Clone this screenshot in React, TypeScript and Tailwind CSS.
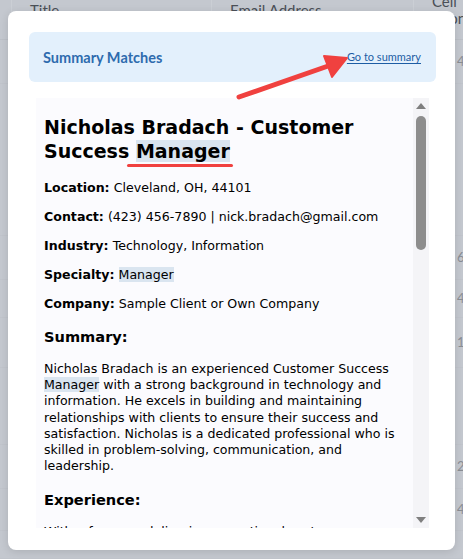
import React from 'react';

const rows = [
  { h: 'h-[44px]', phone: '423-456-7890' },
  { h: 'h-[152px]', phone: '' },
  { h: 'h-[44px]', phone: '614-555-0132' },
  { h: 'h-[38px]', phone: '440-555-0188' },
  { h: 'h-[50px]', phone: '128-555-0147' },
  { h: 'h-[77px]', phone: '' },
  { h: 'h-[44px]', phone: '234-555-0199' },
  { h: 'h-[42px]', phone: '419-555-0163' },
  { h: 'h-[28px]', phone: '' },
];

const Hl = ({ children }: { children: React.ReactNode }) => (
  <span className="bg-[#dae5f0]">{children}</span>
);

const Field = ({ label, children }: { label: string; children: React.ReactNode }) => (
  <p className="my-[13px]">
    <span className="font-bold">{label}</span> {children}
  </p>
);

const App = () => {
  return (
    <div className="relative w-[463px] h-[559px] overflow-hidden bg-[#c4c8cf] font-['Lato',sans-serif]">
      {/* table behind the overlay */}
      <div className="grid grid-cols-[12px_200px_202px_49px] h-[40px] text-[15px] text-[#4b5057] leading-[17px] border-b border-[#bcc0c7]">
        <div className="border-r border-[#cbcfd5]" />
        <div className="pl-[18px] pt-[2px] border-r border-[#cbcfd5] whitespace-nowrap">Title</div>
        <div className="pl-[18px] pt-[2px] border-r border-[#cbcfd5] whitespace-nowrap">Email Address</div>
        <div className="pl-[18px] -mt-[7px] whitespace-nowrap">
          <div>Cell</div>
          <div>Phone</div>
        </div>
      </div>
      {rows.map((r, i) => (
        <div key={i} className={`flex items-center ${r.h} border-b border-[#c0c4cb] text-[13px] text-[#8a8e95]`}>
          <div className="w-[457px] shrink-0" />
          <div className="whitespace-nowrap">{r.phone}</div>
        </div>
      ))}

      {/* modal */}
      <div className="absolute left-[8px] top-[11px] w-[447px] h-[539px] rounded-lg bg-white shadow-[0_2px_8px_rgba(0,0,0,0.12)] pl-[21px] pr-[19px] pt-[21px]">
        <div className="flex items-center justify-between h-[50px] rounded-md bg-[#e3f0fc] pl-[14px] pr-[15px]">
          <span className="text-[14.5px] font-bold text-[#2e6bae] mt-[1px]">Summary Matches</span>
          <a className="text-[11px] text-[#1d5da4] underline underline-offset-2">Go to summary</a>
        </div>

        <div className="ml-[7px] mr-[7px] mt-[16px] h-[430px] flex bg-[#fbfbfe] overflow-hidden">
          <div className="flex-1 overflow-hidden pl-[8px] pr-[6px] pt-[17px] text-[12.6px] leading-[16px] text-black font-['DejaVu_Sans','Verdana',sans-serif]">
            <h1 className="text-[19px] leading-[24px] font-bold mb-[17px]">
              Nicholas Bradach - Customer Success{' '}
              <span className="relative">
                <Hl>Manager</Hl>
                <span className="absolute -left-[9px] -right-[3px] -bottom-[5px] h-[3px] rounded-full bg-[#f0413f]" />
              </span>
            </h1>
            <Field label="Location:">Cleveland, OH, 44101</Field>
            <Field label="Contact:">(423) 456-7890 | nick.bradach@gmail.com</Field>
            <Field label="Industry:">Technology, Information</Field>
            <Field label="Specialty:"><Hl>Manager</Hl></Field>
            <Field label="Company:">Sample Client or Own Company</Field>
            <h3 className="text-[14.6px] leading-[19px] font-bold mt-[15px] mb-[15px]">Summary:</h3>
            <p className="leading-[16.2px]">
              Nicholas Bradach is an experienced Customer Success <Hl>Manager</Hl> with a strong background in
              technology and information. He excels in building and maintaining relationships with clients to
              ensure their success and satisfaction. Nicholas is a dedicated professional who is skilled in
              problem-solving, communication, and leadership.
            </p>
            <h3 className="text-[14.6px] leading-[19px] font-bold mt-[16px] mb-[15px]">Experience:</h3>
            <p className="leading-[16.2px]">
              With a focus on delivering exceptional customer experiences, Nicholas has worked with a wide range of
              clients across the technology sector.
            </p>
          </div>
          <div className="w-[16px] flex flex-col items-center bg-[#f4f4f7]">
            <div className="mt-[5px] w-0 h-0 border-l-[5px] border-r-[5px] border-b-[6px] border-l-transparent border-r-transparent border-b-[#7f7f7f]" />
            <div className="mt-[7px] w-[10px] h-[134px] rounded-full bg-[#8d8d8d]" />
            <div className="flex-1" />
            <div className="mb-[5px] w-0 h-0 border-l-[5px] border-r-[5px] border-t-[6px] border-l-transparent border-r-transparent border-t-[#7f7f7f]" />
          </div>
        </div>
      </div>

      {/* annotation arrow */}
      <svg className="absolute inset-0 pointer-events-none" width="463" height="559" viewBox="0 0 463 559">
        <line x1="239" y1="97" x2="331" y2="65" stroke="#f0413f" strokeWidth="5" strokeLinecap="round" />
        <polygon points="347,58 324,56 332,77" fill="#f0413f" stroke="#f0413f" strokeWidth="2" strokeLinejoin="round" />
      </svg>
    </div>
  );
};

export default App;
